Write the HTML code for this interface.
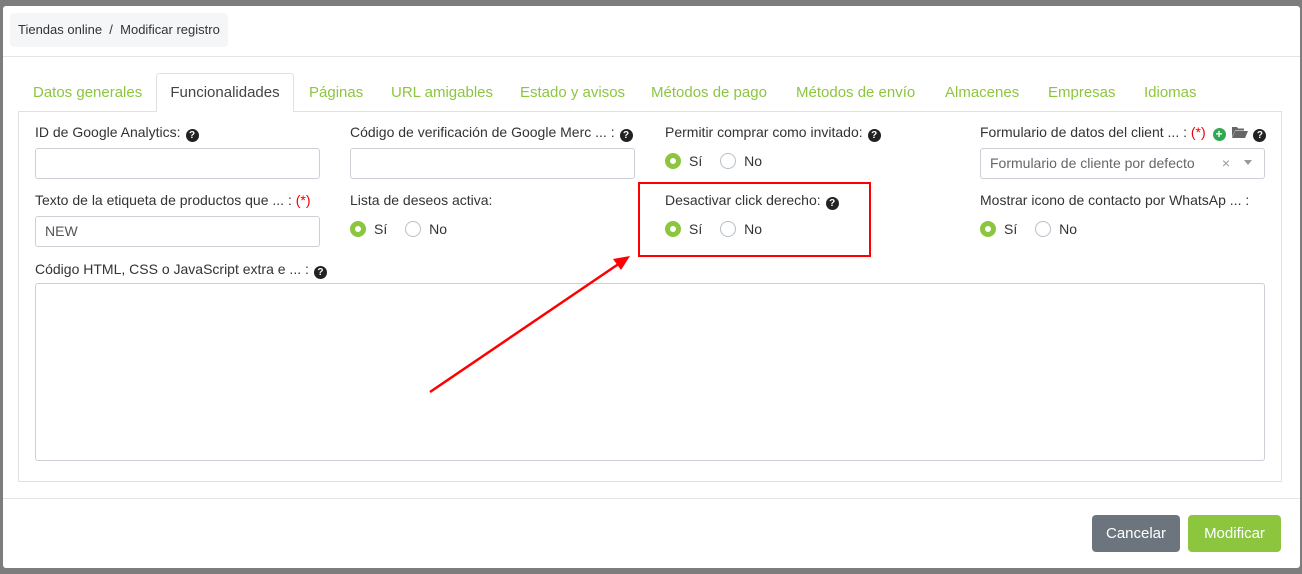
<!DOCTYPE html>
<html><head><meta charset="utf-8"><style>
*{box-sizing:border-box;margin:0;padding:0}
body{width:1302px;height:574px;background:#7d7d7d;font-family:"Liberation Sans",sans-serif;font-size:14px;color:#333;position:relative;overflow:hidden}
.modal{position:absolute;left:3px;top:6px;width:1297px;height:562px;background:#fff;border-radius:3px}
.bc{position:absolute;left:7px;top:7px;width:218px;height:34px;background:#f5f6f8;border-radius:4px;font-size:13px;line-height:34px;padding-left:8px;color:#333}
.hline{position:absolute;left:0;right:0;top:50px;border-top:1px solid #e2e4e8}
.tab{position:absolute;top:78px;color:#8cc63f;font-size:15px;white-space:nowrap}
.atab{position:absolute;left:153px;top:67px;width:138px;height:39px;border:1px solid #dee2e6;border-bottom:none;background:#fff;border-radius:3px 3px 0 0;color:#444;font-size:15px;text-align:center;line-height:38px;z-index:2}
.panel{position:absolute;left:15px;top:105px;width:1264px;height:371px;border:1px solid #dee2e6}
.lbl{position:absolute;font-size:14px;color:#333;white-space:nowrap}
.inp{position:absolute;width:285px;height:31px;border:1px solid #ccd0d6;border-radius:3px;font-size:14px;padding-left:9px;line-height:29px;color:#555}
.q{display:inline-block;width:13px;height:13px;border-radius:50%;background:#222;color:#fff;font-size:10px;font-weight:bold;text-align:center;line-height:13px;vertical-align:-1px;margin-left:5px}
.req{color:#e00}
.radio{position:absolute;font-size:14px;white-space:nowrap}
.r{display:inline-block;width:16px;height:16px;border-radius:50%;border:1px solid #b8bec6;vertical-align:-3px;margin-right:8px}
.r.on{border:5px solid #8cc63f;background:#fff}
.btn{position:absolute;top:509px;height:37px;border-radius:4px;color:#fff;font-size:15px;line-height:37px;text-align:center}
</style></head><body>
<div class="modal">
<div class="bc">Tiendas online &nbsp;/&nbsp; Modificar registro</div>
<div class="hline"></div>
<div class="tab" style="left:30px">Datos generales</div>
<div class="atab">Funcionalidades</div>
<div class="tab" style="left:306px">Páginas</div>
<div class="tab" style="left:388px">URL amigables</div>
<div class="tab" style="left:517px">Estado y avisos</div>
<div class="tab" style="left:648px">Métodos de pago</div>
<div class="tab" style="left:793px">Métodos de envío</div>
<div class="tab" style="left:942px">Almacenes</div>
<div class="tab" style="left:1045px">Empresas</div>
<div class="tab" style="left:1141px">Idiomas</div>
<div class="panel"></div>
</div>
<div class="lbl" style="left:35px;top:124px">ID de Google Analytics:<span class="q">?</span></div>
<div class="inp" style="left:35px;top:148px"></div>
<div class="lbl" style="left:350px;top:124px">Código de verificación de Google Merc ... :<span class="q">?</span></div>
<div class="inp" style="left:350px;top:148px"></div>
<div class="lbl" style="left:665px;top:124px">Permitir comprar como invitado:<span class="q">?</span></div>
<div class="radio" style="left:665px;top:153px"><span class="r on"></span>Sí <span style="display:inline-block;width:14px"></span><span class="r"></span>No</div>
<div class="lbl" style="left:980px;top:124px">Formulario de datos del client ... : <span class="req">(*)</span> <span style="display:inline-block;width:13px;height:13px;border-radius:50%;background:#2fa84f;color:#fff;font-size:12px;font-weight:bold;text-align:center;line-height:13px;vertical-align:-1px;margin-left:3px">+</span> <svg width="16" height="12" viewBox="0 0 16 12" style="vertical-align:-1px;margin-left:3px"><path d="M0 1h5l1 1.5h6v2H3L0 11z M3 5h13l-3 7H0z" fill="#666"/></svg><span class="q">?</span></div>
<div class="inp" style="left:980px;top:148px;color:#666">Formulario de cliente por defecto<span style="position:absolute;right:34px;color:#999">×</span><span style="position:absolute;right:12px;top:11px;border:4px solid transparent;border-top:5px solid #999;width:0;height:0;line-height:0"></span></div>
<div class="lbl" style="left:35px;top:192px">Texto de la etiqueta de productos que ... : <span class="req">(*)</span></div>
<div class="inp" style="left:35px;top:216px">NEW</div>
<div class="lbl" style="left:350px;top:192px">Lista de deseos activa:</div>
<div class="radio" style="left:350px;top:221px"><span class="r on"></span>Sí <span style="display:inline-block;width:14px"></span><span class="r"></span>No</div>
<div class="lbl" style="left:665px;top:192px">Desactivar click derecho:<span class="q">?</span></div>
<div class="radio" style="left:665px;top:221px"><span class="r on"></span>Sí <span style="display:inline-block;width:14px"></span><span class="r"></span>No</div>
<div class="lbl" style="left:980px;top:192px">Mostrar icono de contacto por WhatsAp ... :</div>
<div class="radio" style="left:980px;top:221px"><span class="r on"></span>Sí <span style="display:inline-block;width:14px"></span><span class="r"></span>No</div>
<div class="lbl" style="left:35px;top:261px">Código HTML, CSS o JavaScript extra e ... :<span class="q">?</span></div>
<div class="inp" style="left:35px;top:283px;width:1230px;height:178px"></div>
<div style="position:absolute;left:638px;top:182px;width:233px;height:75px;border:2px solid #f00"></div>
<svg style="position:absolute;left:0;top:0" width="1302" height="574"><line x1="430" y1="392" x2="620" y2="263" stroke="#f00" stroke-width="2.5"/><polygon points="630,256 613,259 621,270" fill="#f00"/></svg>
<div style="position:absolute;left:3px;top:498px;width:1297px;border-top:1px solid #e2e4e8"></div>
<div class="btn" style="left:1092px;top:515px;width:88px;background:#6c757d">Cancelar</div>
<div class="btn" style="left:1188px;top:515px;width:93px;background:#8cc63f">Modificar</div>
</body></html>
